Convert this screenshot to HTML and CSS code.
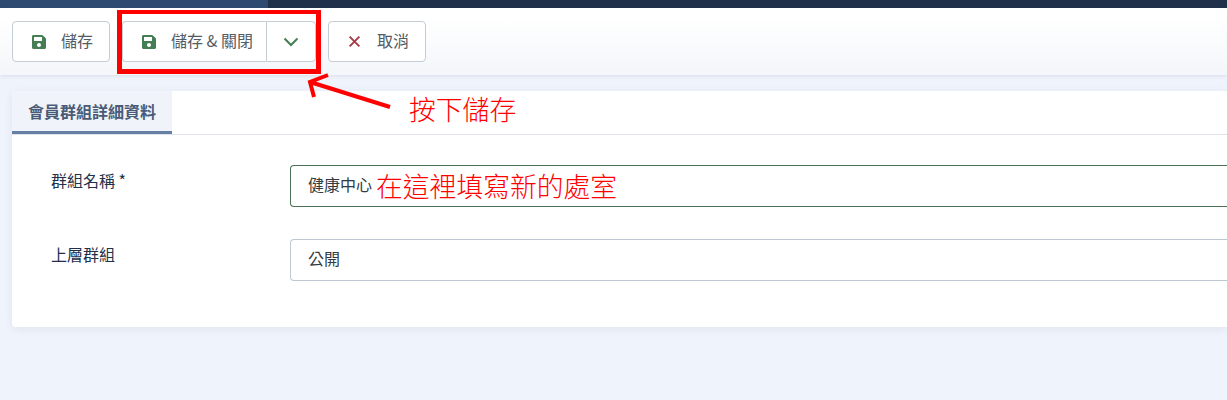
FILE: index.html
```html
<!DOCTYPE html>
<html lang="zh-Hant">
<head>
    <meta charset="UTF-8">
    <title>會員群組詳細資料</title>
    <link rel="stylesheet" href="styles.css">
</head>
<body>
    <div class="topbar">
        <div class="topbar-brand"></div>
    </div>

    <div class="toolbar">
        <button class="btn">
            <svg class="btn-icon icon-save" viewBox="0 32 448 448"><path d="M433.9 129.9l-83.9-83.9A48 48 0 0 0 316.1 32H48C21.5 32 0 53.5 0 80v352c0 26.5 21.5 48 48 48h352c26.5 0 48-21.5 48-48V163.9a48 48 0 0 0-14.1-34zM224 416c-35.3 0-64-28.7-64-64s28.7-64 64-64 64 28.7 64 64-28.7 64-64 64zm96-304.5V212c0 6.6-5.4 12-12 12H76c-6.6 0-12-5.4-12-12V108c0-6.6 5.4-12 12-12h228.5c3.2 0 6.2 1.3 8.5 3.5l3.5 3.5c2.3 2.3 3.5 5.3 3.5 8.5z"/></svg>
            <span>儲存</span>
        </button>

        <div class="btn-group">
            <button class="btn btn-main">
                <svg class="btn-icon icon-save" viewBox="0 32 448 448"><path d="M433.9 129.9l-83.9-83.9A48 48 0 0 0 316.1 32H48C21.5 32 0 53.5 0 80v352c0 26.5 21.5 48 48 48h352c26.5 0 48-21.5 48-48V163.9a48 48 0 0 0-14.1-34zM224 416c-35.3 0-64-28.7-64-64s28.7-64 64-64 64 28.7 64 64-28.7 64-64 64zm96-304.5V212c0 6.6-5.4 12-12 12H76c-6.6 0-12-5.4-12-12V108c0-6.6 5.4-12 12-12h228.5c3.2 0 6.2 1.3 8.5 3.5l3.5 3.5c2.3 2.3 3.5 5.3 3.5 8.5z"/></svg>
                <span>儲存 &amp; 關閉</span>
            </button>
            <button class="btn btn-toggle">
                <svg class="chevron" viewBox="0 0 16 10"><path d="M1.5 1.5L8 8l6.5-6.5"/></svg>
            </button>
        </div>

        <button class="btn">
            <svg class="btn-icon icon-cancel" viewBox="0 0 12 12"><path d="M1.5 1.5l9 9M10.5 1.5l-9 9"/></svg>
            <span>取消</span>
        </button>
    </div>

    <div class="content">
        <div class="card">
            <div class="tabs">
                <div class="tab">會員群組詳細資料</div>
            </div>
            <div class="form">
                <div class="form-row">
                    <label class="form-label">群組名稱 *</label>
                    <div class="form-input form-input-valid">健康中心</div>
                </div>
                <div class="form-row">
                    <label class="form-label">上層群組</label>
                    <div class="form-input">公開</div>
                </div>
            </div>
        </div>
    </div>

    <!-- annotations drawn over the screenshot -->
    <div class="mark-box"></div>
    <svg class="mark-arrow" viewBox="0 0 90 40"><path d="M84 35L4 10M22 3L4 10l4 15"/></svg>
    <div class="mark-text mark-save">按下儲存</div>
    <div class="mark-text mark-fill">在這裡填寫新的處室</div>
</body>
</html>
```

FILE: styles.css
```css
* {
    margin: 0;
    padding: 0;
    box-sizing: border-box;
}

body {
    font-family: "Noto Sans CJK TC", "Noto Sans", sans-serif;
    font-size: 16px;
    background: #eff3fb;
    color: #22304a;
    height: 400px;
    overflow: hidden;
    position: relative;
}

.topbar {
    height: 8px;
    background: #20304a;
}

.topbar-brand {
    width: 268px;
    height: 8px;
    background: #2e4a70;
}

.toolbar {
    display: flex;
    gap: 12px;
    height: 67px;
    padding: 13px 12px;
    background: linear-gradient(to bottom, #ffffff 15%, #f3f6fa 100%);
    box-shadow: 0 1px 4px rgba(50, 70, 110, 0.12);
}

.btn {
    display: flex;
    align-items: center;
    height: 41px;
    padding: 0 16px 0 19px;
    gap: 15px;
    font-family: inherit;
    font-size: 16px;
    white-space: nowrap;
    color: #555b63;
    background: #fff;
    border: 1px solid #c4ccd6;
    border-radius: 4px;
}

.btn span {
    padding-bottom: 3px;
}

.btn-icon {
    width: 14px;
    height: 14px;
    flex-shrink: 0;
}

.icon-save {
    fill: #457d54;
}

.icon-cancel {
    width: 13px;
    height: 13px;
    margin-right: 1px;
    fill: none;
    stroke: #a53c48;
    stroke-width: 1.8;
}

.btn-group {
    display: flex;
}

.btn-main {
    width: 144px;
    padding-right: 0;
    border-radius: 4px 0 0 4px;
    border-right: none;
}

.btn-toggle {
    width: 50px;
    justify-content: center;
    padding: 0;
    border-radius: 0 4px 4px 0;
}

.chevron {
    width: 16px;
    height: 10px;
    fill: none;
    stroke: #457d54;
    stroke-width: 2;
}

.content {
    padding: 16px 0 0 12px;
}

.card {
    height: 236px;
    background: #fff;
    border-radius: 4px 0 0 4px;
    box-shadow: 0 2px 8px rgba(50, 70, 110, 0.08);
}

.tabs {
    height: 44px;
    border-bottom: 1px solid #dfe3e8;
}

.tab {
    width: 160px;
    height: 43px;
    line-height: 41px;
    text-align: center;
    font-weight: 700;
    color: #4a5b78;
    background: #f0f4fa;
    border-bottom: 3px solid #657fa5;
}

.form {
    padding: 30px 0 0 39px;
    display: flex;
    flex-direction: column;
    gap: 32px;
}

.form-row {
    display: flex;
}

.form-label {
    width: 239px;
    line-height: 30px;
    color: #22304a;
}

.form-input {
    flex: 1;
    height: 42px;
    line-height: 37px;
    padding-left: 17px;
    color: #333a42;
    background: #fff;
    border: 1px solid #bcc8d4;
    border-right: none;
    border-radius: 4px 0 0 4px;
}

.form-input-valid {
    border-color: #4c7355;
}

.mark-box {
    position: absolute;
    left: 117px;
    top: 10px;
    width: 204px;
    height: 64px;
    border: 5px solid #ff0000;
    border-top-width: 4px;
}

.mark-arrow {
    position: absolute;
    left: 306px;
    top: 72px;
    width: 90px;
    height: 40px;
    fill: none;
    stroke: #ff0000;
    stroke-width: 4;
}

.mark-text {
    position: absolute;
    font-size: 26.8px;
    font-weight: 300;
    line-height: 36px;
    color: #ff0000;
}

.mark-save {
    left: 409px;
    top: 91px;
}

.mark-fill {
    left: 376px;
    top: 168px;
}
```
